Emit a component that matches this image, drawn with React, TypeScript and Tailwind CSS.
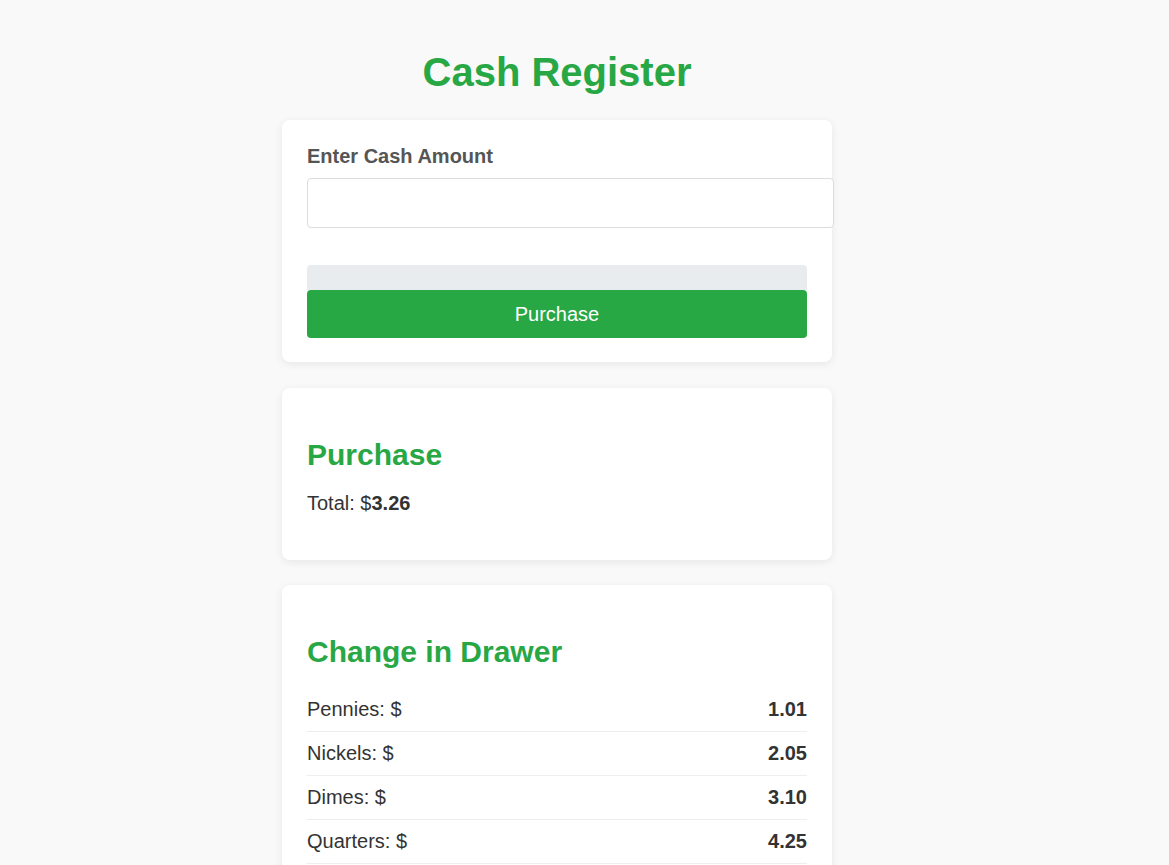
const drawer = [
  { name: "Pennies", value: "1.01" },
  { name: "Nickels", value: "2.05" },
  { name: "Dimes", value: "3.10" },
  { name: "Quarters", value: "4.25" },
  { name: "Ones", value: "90.00" },
  { name: "Fives", value: "55.00" },
  { name: "Tens", value: "20.00" },
  { name: "Twenties", value: "60.00" },
  { name: "Hundreds", value: "100.00" },
];

export default function App() {
  return (
    <div className="min-h-screen bg-[#f9f9f9] text-[#333] font-['Liberation_Sans',Arial,sans-serif] pl-[282px] pt-[49px] pb-10">
      <div className="w-[550px]">
        <h1 className="text-center text-[40px] leading-[46px] font-bold text-[#28a745]">Cash Register</h1>

        <div className="mt-[25px] bg-white rounded-lg shadow-[0_2px_8px_rgba(0,0,0,0.08)] px-[25px] pt-[25px] pb-[24px]">
          <label className="block text-[20px] leading-[23px] font-bold text-[#555]">Enter Cash Amount</label>
          <input
            type="number"
            className="block mt-[10px] w-[527px] h-[50px] border border-[#ddd] rounded-[4px] px-3 text-[20px] outline-none bg-white"
          />
          <div className="mt-[37px] h-[25px] w-[500px] bg-[#e9ecef] rounded-t-[4px]"></div>
          <button className="block w-[500px] h-[48px] bg-[#28a745] text-white text-[20px] rounded-[4px]">Purchase</button>
        </div>

        <div className="mt-[26px] bg-white rounded-lg shadow-[0_2px_8px_rgba(0,0,0,0.08)] px-[25px] pt-[25px] pb-[45px]">
          <h2 className="mt-[25px] text-[30px] leading-[34px] font-bold text-[#28a745]">Purchase</h2>
          <p className="mt-[20px] text-[20px] leading-[23px]">
            Total: $<strong>3.26</strong>
          </p>
        </div>

        <div className="mt-[25px] bg-white rounded-lg shadow-[0_2px_8px_rgba(0,0,0,0.08)] px-[25px] pt-[25px] pb-[25px]">
          <h2 className="mt-[25px] text-[30px] leading-[34px] font-bold text-[#28a745]">Change in Drawer</h2>
          <div className="mt-[19px]">
            {drawer.map((d) => (
              <div key={d.name} className="flex justify-between items-center h-[44px] border-b border-[#eee] text-[20px] leading-[23px]">
                <span>{d.name}: $</span>
                <span className="font-bold">{d.value}</span>
              </div>
            ))}
          </div>
        </div>
      </div>
    </div>
  );
}
